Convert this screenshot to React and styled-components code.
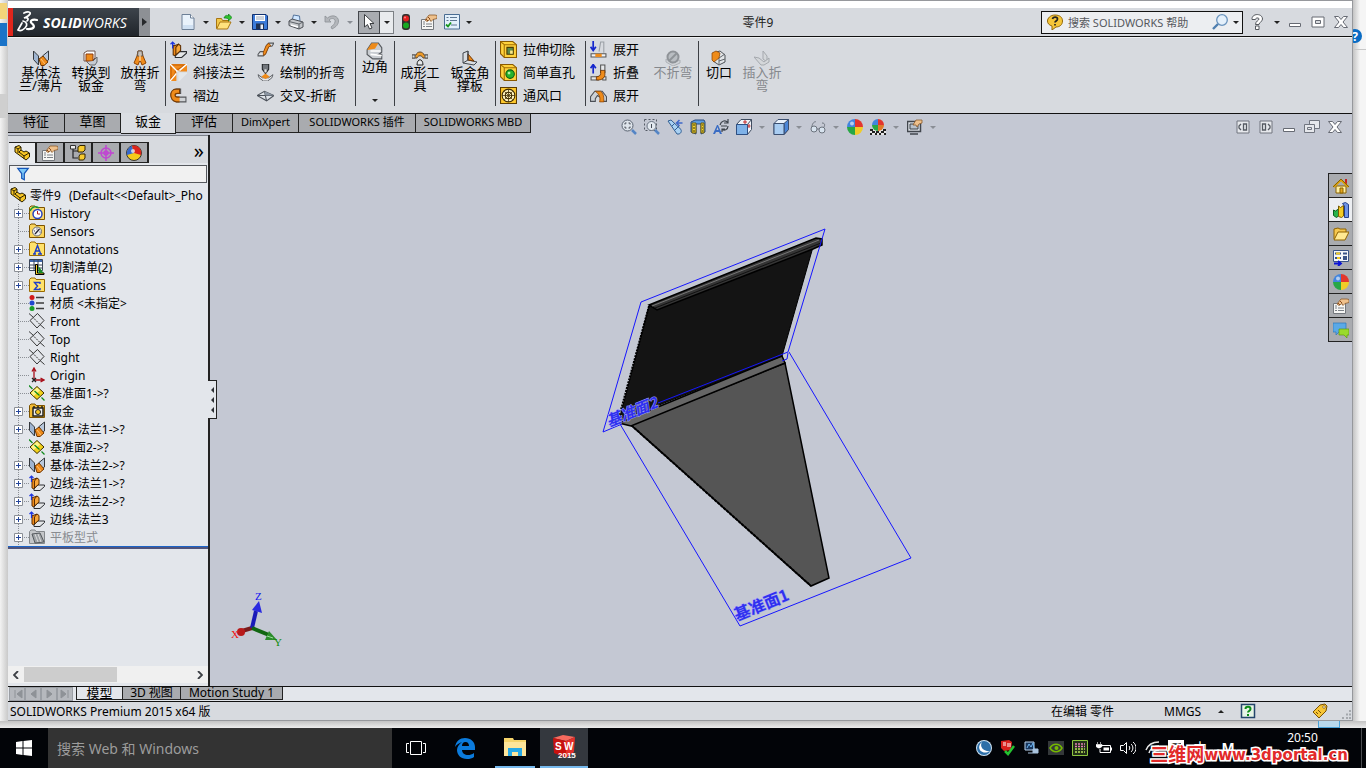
import React from "react";
import styled, { createGlobalStyle, css } from "styled-components";

const ICONS = {
  newDoc: (
    <>
      <path d="M2 .5h8.500L14 4v11.500H2z" fill="#e9f2fb" stroke="#6c7f96" />
      <path d="M10.500.5V4H14" fill="#fff" stroke="#6c7f96" />
      <path d="M3 11h10v4H3z" fill="#cfe0f2" />
    </>
  ),
  open: (
    <>
      <path d="M.5 14.500V4.500h5l1 2h6v2" fill="#f2c94a" stroke="#a87512" />
      <path d="M.7 15 4 8h11l-3.500 7z" fill="#ffe27d" stroke="#a87512" />
      <path d="M8 4c1-3 3-3 4.500-2V0L16 3.500 12.500 7V5C11 4 9.500 4 8 4z" fill="#2fc32f" stroke="#0b7a12" strokeWidth=".7" />
    </>
  ),
  save: (
    <>
      <path d="M.5.500h13.500l1.500 1.500v13.500H.5z" fill="#3c7bd9" stroke="#12316f" />
      <path d="M3 1h10v6H3z" fill="#fff" />
      <path d="M4 3h8M4 5h8" stroke="#9aa7b8" />
      <path d="M4 9.500h8V15H4z" fill="#20304f" />
      <path d="M8.500 10.500h2.500V15H8.500z" fill="#e8edf5" />
    </>
  ),
  print: (
    <>
      <path d="M4 7 5.500 1l6 1L12 7" fill="#cfe6ff" stroke="#55749c" />
      <path d="m1 7 3-2 11 3v5l-4 2L1 11.500z" fill="#c4c7cb" stroke="#4b4f55" />
      <path d="m1 7.500 10 2.500 4-2M11 10v5" fill="none" stroke="#5d6268" />
      <path d="m3 11 7 2" stroke="#fff" strokeWidth="1.500" />
    </>
  ),
  undo: <path d="M1 2v6h6L5 6c3-3 7-1 6 2-.5 2-2 3.500-4 5l1 2c4-2 6.500-4.500 6.500-8C14.500 2 8 0 3.500 4z" fill="#b3b6bb" stroke="#8b9096" strokeWidth=".8" />,
  cursor: <path d="M3.500.5v12.500l3-2.500 2 4.500 2.500-1-2-4.500h4z" fill="#fff" stroke="#3b3e42" />,
  lights: (
    <>
      <rect x="4" y="0" width="8" height="16" rx="3" fill="#32302e" />
      <circle cx="8" cy="4.500" r="3" fill="#e12020" />
      <circle cx="8" cy="11.500" r="3" fill="#18a822" />
      <circle cx="7" cy="3.500" r="1" fill="#ff8080" />
    </>
  ),
  props: (
    <>
      <path d="M.5 5.500h12v10H.5z" fill="#f6f6f4" stroke="#73777c" />
      <path d="M2 10h2m1 0h6M2 12.500h2m1 0h6M2 8h2" stroke="#7c8187" />
      <path d="M4 6 8 1h6l2 .5v3l-4 1-2 2-1-2-3 2z" fill="#efc18c" stroke="#8c5a2c" strokeWidth=".8" />
      <path d="m5 5 2 2m0-4 2 2" stroke="#8c4a1c" />
    </>
  ),
  list: (
    <>
      <path d="M.5.500h15v14.500H.5z" fill="#e3f0fb" stroke="#496c92" />
      <path d="M2.500 3.500h2M6 3.500h7M2.500 6.500h2M6 6.500h7M7 11h6" stroke="#5c7591" />
      <path d="m2 10.500 2 2 3-4" fill="none" stroke="#17961d" strokeWidth="1.800" />
    </>
  ),
  baseFlange: (
    <>
      <path d="M.5 1v8.500l5 5.500V6z" fill="#9fb4d0" stroke="#34383d" />
      <path d="M15.500 1v9l-4 3-2-4V6z" fill="#b9c8dc" stroke="#34383d" />
      <path d="m6 9 4-3 5 6-4 3.500H8z" fill="#ee8b1a" stroke="#703600" />
      <path d="m8 9 4 5" stroke="#ffc277" />
    </>
  ),
  convert: (
    <>
      <path d="M1 3 4 1h8v7l-3 3H1z" fill="#fff" stroke="#6f5348" />
      <path d="M3 4h7v7H3z" fill="#ee8b1a" stroke="#8a3b10" />
      <path d="m10 11 4-4v5l-2 3H7L4 12" fill="#c6cbd2" stroke="#64686e" />
    </>
  ),
  loft: (
    <>
      <path d="M6 1h4l1 5 3 7-4 2-2-5-2 5-4-2 3-7z" fill="#ef8c1d" stroke="#8f4300" />
      <path d="M6 1h4l.5 5h-5z" fill="#c9c3bd" stroke="#64584c" />
      <path d="M8 5v6" stroke="#ffd29a" strokeWidth="1.500" />
    </>
  ),
  edge: (
    <>
      <path d="M4 4.500 8 3v7l-3 4-2-1V4z" fill="#ee8b1a" stroke="#5c2d00" />
      <path d="m5 14 4-4h6.500v1.500L11 15.500H5z" fill="#e4e6e8" stroke="#2c2f33" />
      <path d="m8 3 2 1.500V9l-4.500 4V6z" fill="#f9a73b" stroke="#5c2d00" />
      <path d="M2.500 7V1M.500 3l2-2 2 2" fill="none" stroke="#1d35e0" strokeWidth="1.200" />
    </>
  ),
  miter: (
    <>
      <path d="M0 0h16L9 6H6v4l-6 6z" fill="#f18a1c" />
      <path d="M1 1h13L8 5 5 5 5 9 1 14z" fill="none" stroke="#c65f00" />
      <path d="M9 6 16 0v7H9zM6 9v7H0z" fill="#f18a1c" />
      <path d="m9 6 7-6M6 9l-6 7M0 0l7 7" stroke="#fff" strokeWidth="1.300" />
      <path d="M8 8h8v1l-7 7H8z" fill="#e3e7ea" />
    </>
  ),
  hem: (
    <>
      <path d="M15 9.500V14H6C-1 13-1 2 6 2h4v4H7c-3 0-3 3.500 0 3.500z" fill="#d0d3d6" stroke="#54575b" />
      <path d="M9 14H6C-1 13-1 2 6 2h3v4H7c-3 0-3 3.500 0 3.500h2" fill="#ee8b1a" stroke="#7c3c00" />
    </>
  ),
  jog: (
    <>
      <path d="M1 12.500 3 10h4l2-6 2-2h5l-2 3h-3l-3 7-2 2H1z" fill="#dfe2e5" stroke="#55585c" />
      <path d="m6 10.500 2.500-6L11 2l2 2.500-2 1-3 7-2 1z" fill="#ef8c1d" stroke="#8f4300" strokeWidth=".8" />
    </>
  ),
  sketched: (
    <>
      <path d="M5 0h6v5L8 9 5 5z" fill="#71767c" stroke="#1f2225" />
      <path d="M7 5h2v3H7z" fill="#dfe1e3" />
      <path d="m1 10 4 3h6l4-3-1 3-4 3H6l-4-3z" fill="#e8eaec" stroke="#4b4f55" strokeWidth=".8" />
      <path d="m4 12 4-3 4 3-4 2z" fill="#ee8b1a" />
    </>
  ),
  cross: (
    <>
      <path d="m0 8 7-4 9 4-7 5z" fill="#dde2e8" stroke="#4b5159" />
      <path d="m0 8 16 0M7 4l2 9" stroke="#4b5159" />
      <path d="m7 4 1 4 8 0z" fill="#8b96a3" />
    </>
  ),
  corner: (
    <>
      <path d="M1 7 5 1h6l3 4v4l-3 2h3v4H6l-5-4z" fill="#c9cdd2" stroke="#53575c" />
      <path d="M1 7 5 1h6L8 6z" fill="#ee8b1a" />
      <path d="m4 11 10 1M4 8h9" stroke="#fff" strokeWidth="1.500" />
    </>
  ),
  forming: (
    <>
      <path d="M0 5h4c1-4 7-4 8 0h4v3h-5c-1-3-5-3-6 0H0z" fill="#ee9a26" stroke="#5b4630" />
      <path d="M0 5h3v3H0zM13 5h3v3h-3z" fill="#d9dcdf" stroke="#55585c" />
      <path d="M5 15c0-7 6-7 6 0z" fill="#e7e9eb" stroke="#222" />
    </>
  ),
  gusset: (
    <>
      <path d="m1 3 5-2v9l9 2-3 3-11-2z" fill="#d8dce1" stroke="#43474c" />
      <path d="m6 4 6 7-6-1z" fill="#ee8b1a" stroke="#713500" />
      <path d="M6 1v9L1 13" fill="none" stroke="#43474c" />
    </>
  ),
  extrudeCut: (
    <>
      <path d="M.5.500H12l3.500 3v12H4L.5 12z" fill="#ffd33c" stroke="#8a5a00" />
      <path d="M4 3.500h11.500M4 3.500 4 15M.5.5 4 3.500" stroke="#a36d00" fill="none" />
      <path d="M6.500 6h6v6.500h-6z" fill="#5c8c4d" stroke="#4d3a00" />
      <path d="M9.500 9H12v3H9.500z" fill="#ffe88a" />
    </>
  ),
  hole: (
    <>
      <path d="M.5.500H12l3.500 3v12H4L.5 12z" fill="#ffd33c" stroke="#8a5a00" />
      <path d="M4 3.500h11.500M4 3.500V15M.5.5 4 3.500" stroke="#a36d00" fill="none" />
      <circle cx="9.500" cy="9.500" r="4" fill="#26b32c" stroke="#0c5c12" />
      <circle cx="8.500" cy="8.500" r="1.300" fill="#b5f0a4" />
    </>
  ),
  vent: (
    <>
      <path d="M.5.500h15v15H.5z" fill="#ffc92d" stroke="#5c3c00" />
      <circle cx="8" cy="8" r="6" fill="#fff2bd" stroke="#3d2a00" />
      <circle cx="8" cy="8" r="3" fill="none" stroke="#3d2a00" />
      <path d="M8 2v12M2 8h12M4 4l8 8M12 4l-8 8" stroke="#3d2a00" strokeWidth=".7" />
    </>
  ),
  unfold: (
    <>
      <path d="M3 0v8M.5 5.500 3 9l2.500-3.500" fill="none" stroke="#1527cd" strokeWidth="1.600" />
      <path d="M8.500 10 10 1h3v10" fill="none" stroke="#9a9fa5" />
      <path d="M1 12h14v3H1z" fill="#f3f3f3" stroke="#555" />
      <path d="M5 12h6v3H5z" fill="#ee8b1a" />
    </>
  ),
  fold: (
    <>
      <path d="M3 9V1M.500 4 3 .5 5.500 4" fill="none" stroke="#1527cd" strokeWidth="1.600" />
      <path d="M1 12h7v3H1zM12 12h3v3h-3zM10 1h4v7h-4z" fill="#e7e9eb" stroke="#555" />
      <path d="M10 6h4v4c0 3-3 5-6 5H6v-3c2 0 4-1 4-3z" fill="#ee8b1a" stroke="#6b3200" strokeWidth=".8" />
    </>
  ),
  flatten: (
    <>
      <path d="M.5 13.500V9l4-5h7l4 5v4.500H10V10L7 8l-2 3v2.500z" fill="#cdd2d7" stroke="#4b4f55" />
      <path d="M5 4h5c3 2 3 6 3 10H9c1-4 0-7-4-10z" fill="#ee8b1a" stroke="#843e00" strokeWidth=".7" />
    </>
  ),
  noBend: (
    <>
      <path d="m1 9 6 4 8-3v3l-7 3-7-4z" fill="#d0d3d7" stroke="#aeb2b7" />
      <circle cx="8" cy="7" r="5.500" fill="#b9bdc2" stroke="#8f9398" strokeWidth="2" />
      <path d="m4 11 8-8" stroke="#8f9398" strokeWidth="2" />
    </>
  ),
  rip: (
    <>
      <path d="m2 3 7-2 5 4v7l-6 3-6-4z" fill="#e2e5e8" stroke="#4e5257" />
      <path d="M8 15V8l6-4M8 11l6-2" fill="none" stroke="#62666b" />
      <path d="M1 3 5 1l4 2-1 5-5 4-2-2z" fill="#ee8b1a" stroke="#843e00" strokeWidth=".7" />
    </>
  ),
  insertBend: (
    <>
      <path d="m9 1 4 5v6l-4-3z" fill="#d4d7da" stroke="#a5a9ae" />
      <path d="m0 7 5 1 5 4 5-4v4l-5 3H7z" fill="#d4d7da" stroke="#a5a9ae" />
    </>
  ),
  zoomFit: (
    <>
      <circle cx="6.500" cy="6.500" r="5.500" fill="#dfe5ec" stroke="#596270" />
      <path d="M4 5.500V4h1.500M7.500 4H9v1.500M9 7.500V9H7.500M5.500 9H4V7.500" fill="none" stroke="#444b55" />
      <path d="m11 11 4 4" stroke="#5485c5" strokeWidth="2.500" />
    </>
  ),
  zoomArea: (
    <>
      <path d="M.5.500h12v11H.5z" fill="none" stroke="#555b65" strokeDasharray="2 2" />
      <circle cx="7.500" cy="7" r="4.500" fill="#e3e9f0" stroke="#6a7482" />
      <path d="M7.500 5v4" stroke="#444b55" />
      <path d="m11 11 4 4" stroke="#5485c5" strokeWidth="2.500" />
    </>
  ),
  prevView: (
    <>
      <path d="m1 2 3-1 10 9.500c1 3-1 5-4 4.500z" fill="#a9d1f3" stroke="#315f93" />
      <path d="m5 7 3-3M8 11l4-4" stroke="#315f93" />
      <path d="M15.500 4H10m2.500-3-3 3 3 3" fill="none" stroke="#3f68c9" strokeWidth="1.500" />
    </>
  ),
  section: (
    <>
      <path d="m1 3 4-2h9l1 2v10l-4 2V5H6v10l-5-2z" fill="#5a9be0" stroke="#2a4a7c" />
      <path d="M2 4h4v10H2zM11 4h3v10h-3z" fill="#f4d335" stroke="#6a5a10" />
      <path d="M3 6h2M3 9h2M3 12h2M12 6h1m-1 3h1m-1 3h1" stroke="#3a3a00" />
    </>
  ),
  rotate: (
    <>
      <path d="m0 15 4-9h1l4 9H7l-1-2H3l-1 2zM3.500 11h2L4.500 8z" fill="#3a6cc4" />
      <path d="M7 6c1-4 6-6 8-2M15 0v4h-4M15 7c0 4-4 5-6 3M9 13v-3h3M8 7h6" fill="none" stroke="#3c424b" strokeWidth="1.200" />
    </>
  ),
  orient: (
    <>
      <path d="M.5 5.500 5 .5h10.500v10l-4 5H.5z" fill="#f0f4f9" stroke="#3f4c60" />
      <path d="M.5 5.500h11v10H.5z" fill="#7fb2e8" stroke="#2d4f83" />
      <path d="m11.500 5.500 4-5" stroke="#3f4c60" />
      <path d="M7 3h4m-2-2v4M13 5v4m-1.500-2h3" stroke="#c42a2a" />
    </>
  ),
  cube: (
    <>
      <path d="M1 4.500 5 .5h10.500v10l-4.500 5H1z" fill="#e9f2fc" stroke="#3b4f70" />
      <path d="m11 4.500 4.500-4v10l-4.500 5z" fill="#4a86d8" stroke="#3b4f70" />
      <path d="M1 4.500h10v11H1z" fill="#a9cdf2" stroke="#3b4f70" />
    </>
  ),
  glasses: (
    <>
      <circle cx="4" cy="10" r="3" fill="#d7e3ee" stroke="#6c737d" />
      <circle cx="12" cy="11" r="3" fill="#d7e3ee" stroke="#6c737d" />
      <path d="M7 10h2M2 8c0-4 3-6 4-5M14 8c1-2 1-4-2-4" fill="none" stroke="#6c737d" />
    </>
  ),
  ball: (
    <>
      <path d="M8 8V0A8 8 0 0 0 0 8z" fill="#4285dd" />
      <path d="M8 8h8A8 8 0 0 0 8 0z" fill="#e3362d" />
      <path d="M8 8H0a8 8 0 0 0 8 8z" fill="#28a745" />
      <path d="M8 8v8a8 8 0 0 0 8-8z" fill="#f0cc28" />
      <circle cx="5" cy="4.500" r="2" fill="#fff" opacity=".6" />
    </>
  ),
  scene: (
    <>
      <path d="M0 10h16v6H0z" fill="#e4e4e4" />
      <path d="M0 10h3v2H0zM13 10h3v2h-3zM2 12h3v2H2zM11 12h3v2h-3zM6 12h3v2H6zM0 14h2v2H0zM5 14h2v2H5zM9 14h2v2H9zM14 14h2v2h-2z" fill="#222" />
      <path d="M8 6V0a6 6 0 0 0-6 6z" fill="#4285dd" />
      <path d="M8 6h6a6 6 0 0 0-6-6z" fill="#e3362d" />
      <path d="M8 6H2a6 6 0 0 0 6 6z" fill="#28a745" />
      <path d="M8 6v6a6 6 0 0 0 6-6z" fill="#e07a28" />
    </>
  ),
  viewSet: (
    <>
      <path d="M.5 2.500h13v10H.5z" fill="#d8dde3" stroke="#41464d" strokeWidth="1.500" />
      <path d="M3 5h8v5H3z" fill="#b9c2cc" stroke="#41464d" />
      <path d="M3 15h8" stroke="#41464d" strokeWidth="1.500" />
      <path d="m6 6 3-5h6v3l-3 1-2 3-1-2z" fill="#efc18c" stroke="#8c5a2c" strokeWidth=".8" />
    </>
  ),
  part: (
    <>
      <path d="M1 2 5 .5 7 2v3l3 2 2-1 3.500 2v4L12 15 1 7z" fill="#f6c526" stroke="#2b2100" />
      <path d="m1 2 3 2 3-2M4 4v4M7 5 5 7l5 4 5-3M10 11v3" fill="none" stroke="#2b2100" />
    </>
  ),
  config: (
    <>
      <path d="M3 4v9h5M3 6h5" fill="none" stroke="#222" strokeWidth="1.200" />
      <path d="m8 2 2-1.500h5V5l-2 2H8zM9 11l1.500-2H15v4l-1.500 2H9z" fill="#f7ca2d" stroke="#322500" />
      <path d="M.5.500h5v3.500h-5z" fill="#eee" stroke="#333" />
    </>
  ),
  target: (
    <g fill="none" stroke="#c046d2" strokeWidth="1.500">
      <circle cx="8" cy="8" r="5" />
      <circle cx="8" cy="8" r="2" />
      <path d="M8 0v16M0 8h16" />
    </g>
  ),
  ball3: (
    <>
      <circle cx="8" cy="8" r="7.500" fill="#f4cb1d" stroke="#333" />
      <path d="M8 8 1 10A8 8 0 0 1 6 .7z" fill="#3568ce" />
      <path d="M8 8 6 .7A7.500 7.500 0 0 1 15 10z" fill="#dc241e" />
      <circle cx="7" cy="6" r="2" fill="#fff" opacity=".7" />
    </>
  ),
  history: (
    <>
      <path d="M.5 2.500 2 1h4l1 1.500h8.500v12H.5z" fill="#f9d96d" stroke="#7d5300" />
      <circle cx="8.500" cy="9" r="4.500" fill="#fff" stroke="#2742c0" strokeWidth="1.500" />
      <path d="M8.500 6v3h2.500" stroke="#b31c1c" fill="none" />
      <path d="M1 6c2-5 7-5 9-3" fill="none" stroke="#1a9b31" strokeWidth="1.500" />
    </>
  ),
  sensor: (
    <>
      <path d="M.5 2.500 2 1h4l1 1.500h8.500v12H.5z" fill="#fbd55a" stroke="#7d5300" />
      <circle cx="8" cy="8.500" r="4.500" fill="#f0f0f0" stroke="#6c6c6c" />
      <path d="m6 11 4.500-5" stroke="#223" strokeWidth="1.300" />
      <path d="M5 8h1M8 5.500v1M10.500 9h1" stroke="#335" />
    </>
  ),
  annot: (
    <>
      <path d="M.5 2.500 2 1h4l1 1.500h8.500v12H.5z" fill="#ffe26b" stroke="#9a6a00" />
      <path d="M4 13h3M9 13h4M5.500 12.500l3-8 3 8M6.500 10h4" fill="none" stroke="#1d3ec9" strokeWidth="1.400" />
    </>
  ),
  cutList: (
    <>
      <path d="M.5.500h13v11H.5z" fill="#fff" stroke="#3b4658" />
      <path d="M1 1h12v2H1z" fill="#3f67ad" />
      <path d="M1 6h12M1 9h12M5 1v10M9 1v10" stroke="#3b4658" />
      <path d="M6.500 5.500h2V14H15v1.500H6.500z" fill="#f7d22e" stroke="#000" />
      <path d="m9.500 7 5 7h-5z" fill="#158a25" />
    </>
  ),
  equation: (
    <>
      <path d="M.5 2.500 2 1h4l1 1.500h8.500v12H.5z" fill="#ffe26b" stroke="#9a6a00" />
      <path d="M11 7V5.500H5.500L8.500 9l-3 3.500H11V11" fill="none" stroke="#1d3ec9" strokeWidth="1.400" />
    </>
  ),
  material: (
    <>
      <circle cx="3" cy="2.500" r="2.500" fill="#d21b1b" />
      <circle cx="3" cy="8" r="2.500" fill="#2046cf" />
      <circle cx="3" cy="13.500" r="2.500" fill="#1a9d29" />
      <path d="M7 2.500h8M7 8h8M7 13.500h8" stroke="#3c3c3c" strokeWidth="1.600" />
    </>
  ),
  plane: (
    <g fill="none" stroke="#222" strokeWidth=".9">
      <path d="m8.500.5 6.500 7-7 7.500-7-7.500zM0 .5l4.500 4M11 11.500l4.500 4" />
      <path d="m5 5.500 5.500 5.500" strokeDasharray="2 1" />
    </g>
  ),
  origin: (
    <>
      <path d="M5 13V2M3 4.500 5 1l2 3.500M5 13h9m-2.500-2L15 13l-3.500 2" fill="none" stroke="#a80f1a" strokeWidth="1.300" />
      <path d="m3 11 4 4m-4 0 4-4" stroke="#222" strokeWidth="1.300" />
    </>
  ),
  refPlane: (
    <>
      <path d="m8 1.500 7 6.500-7 6.500L1 8z" fill="#f2d21d" stroke="#3a2c00" />
      <path d="m8 2.500 3 3L4.500 11 2 8z" fill="#fff48a" />
      <path d="m0 .5 3.500 3.500m2 2 5 4.500m2 2 3 3" stroke="#0f8a1c" strokeWidth="1.300" />
    </>
  ),
  sheet: (
    <>
      <path d="M.5 2.500 2 1h4l1 1.500h8.500v12H.5z" fill="#f3bc33" stroke="#7d5300" />
      <path d="M4 5h10v8H4z" fill="#eee" stroke="#222" strokeWidth="1.500" />
      <circle cx="9" cy="9" r="2.500" fill="#f6c526" stroke="#222" />
      <path d="M5 3v2m4-2v2m4-2v2" stroke="#222" strokeWidth="1.500" />
    </>
  ),
  flat: (
    <>
      <path d="M.5 2.500 2 1h4l1 1.500h8.500v12H.5z" fill="#c4c6c9" stroke="#84888c" />
      <path d="m3 5 8-1 4 9-9 1z" fill="#9da1a5" stroke="#55595d" />
      <path d="m6 5 3 8M9 5l3 8" stroke="#ddd" />
    </>
  ),
  filter: <path d="M2 1.500h12L9.500 7.500v7l-3-1.500V7.500z" fill="#7cc8f7" stroke="#1756b8" strokeWidth="1.400" />,
  home: (
    <>
      <path d="M12 1h2v5h-2z" fill="#c62020" />
      <path d="M3 8h10v7H3z" fill="#fff0a5" stroke="#8a6300" />
      <path d="m.5 9 7.500-7 7.500 7" fill="none" stroke="#e0a000" strokeWidth="2" />
      <path d="m0 9 8-8 8 8" fill="none" stroke="#5f4700" strokeWidth=".7" />
      <path d="M7 10h3v5H7z" fill="#e6a61c" stroke="#8a6300" />
    </>
  ),
  library: (
    <>
      <path d="m.5 8 2 1 3-2v7l-2 1.500-3-2z" fill="#27b34b" stroke="#0a5e20" />
      <path d="m5.500 4 2 1.500 3-2V14l-2 1.500-3-1z" fill="#f2cb25" stroke="#7a5b00" />
      <path d="m9.500 1.500 3-1 3 2v13h-4V4z" fill="#6e93e6" stroke="#233f8b" />
    </>
  ),
  folderOpen: (
    <>
      <path d="M1 13V3l4-1 2 1h6v3" fill="#f6c84f" stroke="#8f6200" />
      <path d="m1 14 4-8h11l-4 8z" fill="#ffe992" stroke="#8f6200" />
    </>
  ),
  palette: (
    <>
      <path d="M.5.500h15v11H.5z" fill="#f4f7fb" stroke="#3a5488" />
      <path d="M2 3.500h6M10 3.500h4M2 8h6M10 7h4M10 9h4" stroke="#3a5488" strokeWidth="2" />
      <path d="M3 3.500h4M4 8h3" stroke="#f2cb25" strokeWidth="2" />
      <path d="M1 13.500h6M5 11l3 2.500L5 16" stroke="#0a12d8" strokeWidth="1.800" fill="none" />
    </>
  ),
  chat: (
    <>
      <path d="M0 1h13v9H6l-3 3v-3H0z" fill="#5aa9e6" stroke="#2b77b8" strokeWidth=".7" />
      <path d="M6 7h10v6h-2v3l-3-3H6z" fill="#9ada2b" stroke="#5e9a0c" strokeWidth=".7" />
    </>
  ),
  tip: (
    <>
      <path d="M8 1c5 0 7.500 2.500 7.500 6S13 13 9 13l-4 3v-4C2 11 .5 9.500.5 7S3 1 8 1z" fill="#f5c63a" stroke="#94690c" />
      <path d="M5.500 5c.5-2.500 5-2.500 5 0 0 2-2.500 2-2.500 3.500M8 10v1.500" fill="none" stroke="#222" strokeWidth="1.700" />
    </>
  ),
  lens: (
    <>
      <circle cx="10" cy="6" r="5.300" fill="#e4f0fb" stroke="#6a93bd" strokeWidth="1.300" />
      <path d="m1 15 5-5" stroke="#4f7fb0" strokeWidth="2.400" />
    </>
  ),
  help: (
    <>
      <path d="M3 5.500C2.500-1 13.500-1 13.500 5c0 3-3.500 3-3.500 5.500H6.500c0-3.500 3.500-4 3.500-5.500 0-1.500-3.500-1.500-3.500.5zM6.500 12H10v3.500H6.500z" fill="#fff" stroke="#55595f" />
    </>
  ),
  min: <path d="M2.500 9.500h11v3h-11z" fill="#fff" stroke="#666a73" />,
  max: (
    <>
      <path d="M2 3h12v10H2z" fill="#fff" stroke="#666a73" />
      <path d="M5.500 6.500h5v3h-5z" fill="#d9dce0" stroke="#666a73" />
    </>
  ),
  close: <path d="M1.500 2.500h4L8 5.500l2.500-3h4L10 8l4.500 5.500h-4L8 10.500l-2.500 3h-4L6 8z" fill="#fff" stroke="#666a73" />,
  restore: (
    <>
      <path d="M5.500 1.500h10v8h-10z" fill="#e6e8ec" stroke="#70757f" />
      <path d="M.5 5.500h10v8H.5z" fill="#e6e8ec" stroke="#70757f" />
      <path d="M3.500 8.500h4v2h-4z" fill="none" stroke="#70757f" />
    </>
  ),
  paneL: (
    <>
      <path d="M2 2h12v12H2z" fill="#e6e8ec" stroke="#70757f" />
      <path d="M8.500 5h3v6h-3zM6 5 4 7v2l2 2" fill="none" stroke="#555a62" strokeWidth="1.300" />
    </>
  ),
  paneR: (
    <>
      <path d="M2 2h12v12H2z" fill="#e6e8ec" stroke="#70757f" />
      <path d="M4.500 5h3v6h-3zM10 5l2 2v2l-2 2" fill="none" stroke="#555a62" strokeWidth="1.300" />
    </>
  ),
  qHelp: (
    <>
      <path d="M1.500 1.500h13v13h-13z" fill="#e6f4e6" stroke="#24456c" strokeWidth="1.500" />
      <path d="M5.500 6c0-3 5-3 5 0 0 2-2.500 2-2.500 3.500M8 11v2" fill="none" stroke="#0c8b18" strokeWidth="2" />
    </>
  ),
  tag: (
    <>
      <path d="m1 9 7-7 5-1 2 2-1 5-7 7z" fill="#f7c536" stroke="#7a5100" />
      <circle cx="12" cy="4" r="1.300" fill="#fff" stroke="#7a5100" strokeWidth=".7" />
      <path d="m4 9 2 2m0-4 3 3" stroke="#7a5100" />
    </>
  ),
  moon: (
    <>
      <circle cx="8" cy="8" r="8" fill="#cfe4f5" />
      <circle cx="8" cy="8" r="7" fill="#2d6fa8" />
      <path d="M6 2c-7 6 0 14 8 9-6 1-11-4-8-9z" fill="#fff" />
    </>
  ),
  swCheck: (
    <>
      <path d="m1 1 8-1 3 2-1 8-7 1-3-3z" fill="#d9201c" />
      <path d="M3 3h3M3 5h3M8 3v4m2-4v4" stroke="#fff" />
      <path d="m5 11 3 3 6-8" fill="none" stroke="#25c330" strokeWidth="2.500" />
    </>
  ),
  net: (
    <>
      <path d="M1 2h9v8H1z" fill="#17355c" stroke="#b9d3ee" />
      <path d="m3 8 2-4 2 3 2-4 1 6" fill="none" stroke="#6eb5f2" />
      <path d="M9 9h5v4H9zM4 13h5" fill="#a9c3de" stroke="#a9c3de" />
    </>
  ),
  nvidia: (
    <>
      <path d="M0 1h16v14H0z" fill="#34383a" />
      <path d="M2 8c3-5 9-5 12 0-3 5-9 5-12 0z" fill="none" stroke="#76b900" strokeWidth="1.500" />
      <circle cx="8.500" cy="8" r="2" fill="#76b900" />
    </>
  ),
  meter: (
    <>
      <path d="M.5.500h15v15H.5z" fill="#223017" stroke="#8dc63f" />
      <path d="M3 4h10M3 6.500h10" stroke="#e27fb7" strokeWidth="1.500" strokeDasharray="2 1" />
      <path d="M3 9h10M3 12h10" stroke="#b8e05c" strokeWidth="1.500" strokeDasharray="2 1" />
    </>
  ),
  battery: (
    <>
      <path d="M6 5.500h8.500v7H4V9M15.500 7.500v3" fill="none" stroke="#fff" />
      <path d="M7.500 7.500H13v3H7.500z" fill="#fff" />
      <path d="M1.500 2v2m3-2v2M0 4.500h6v2L4 8H2L0 6.500z" fill="#fff" stroke="#fff" strokeWidth=".6" />
    </>
  ),
  volume: (
    <g fill="none" stroke="#fff">
      <path d="M.5 5.500h3l3-3v11l-3-3h-3z" />
      <path d="M9 6c1 1 1 3 0 4M11 4c2.500 2 2.500 6 0 8M13 2c4 3 4 9 0 12" />
    </g>
  ),
  wifi: (
    <g fill="none" stroke="#e8e8e8" strokeWidth="1.500">
      <path d="M2 10C4 5 9 2 15 2M5 13c1-4 5-7 10-7M9 14c1-3 3-4 6-4" />
    </g>
  ),
  keyboard: (
    <>
      <path d="M0 0h16v16H0z" fill="#fff" />
      <path d="M3 4h10M3 8h10M3 12h10" stroke="#000" strokeWidth="1.500" />
    </>
  ),
};

const Icon = ({ name, size = 16 }) => (
  <svg width={size} height={size} viewBox="0 0 16 16" aria-hidden="true">
    {ICONS[name]}
  </svg>
);

const ribbonGroups = {
  flange: [
    ["edge", "边线法兰"],
    ["miter", "斜接法兰"],
    ["hem", "褶边"],
  ],
  bend: [
    ["jog", "转折"],
    ["sketched", "绘制的折弯"],
    ["cross", "交叉-折断"],
  ],
  cut: [
    ["extrudeCut", "拉伸切除"],
    ["hole", "简单直孔"],
    ["vent", "通风口"],
  ],
  unfold: [
    ["unfold", "展开"],
    ["fold", "折叠"],
    ["flatten", "展开"],
  ],
};

// name, width, latin label
const tabs = [
  ["特征", 57],
  ["草图", 56],
  ["钣金", 55],
  ["评估", 57],
  ["DimXpert", 66, true],
  ["SOLIDWORKS 插件", 117, true],
  ["SOLIDWORKS MBD", 115, true],
];

const headsUp = [
  ["zoomFit", "整屏显示全图"],
  ["zoomArea", "局部放大"],
  ["prevView", "上一视图"],
  ["section", "剖面视图"],
  ["rotate", "旋转视图"],
  ["orient", "视图定向", true],
  ["cube", "显示样式", true],
  ["glasses", "隐藏/显示项目", true],
  ["ball", "编辑外观"],
  ["scene", "应用布景", true],
  ["viewSet", "视图设定", true],
];

// icon, text, can be expanded
const tree = [
  ["history", "History", true],
  ["sensor", "Sensors"],
  ["annot", "Annotations", true],
  ["cutList", "切割清单(2)", true],
  ["equation", "Equations", true],
  ["material", "材质 <未指定>"],
  ["plane", "Front"],
  ["plane", "Top"],
  ["plane", "Right"],
  ["origin", "Origin"],
  ["refPlane", "基准面1->?"],
  ["sheet", "钣金", true],
  ["baseFlange", "基体-法兰1->?", true],
  ["refPlane", "基准面2->?"],
  ["baseFlange", "基体-法兰2->?", true],
  ["edge", "边线-法兰1->?", true],
  ["edge", "边线-法兰2->?", true],
  ["edge", "边线-法兰3", true],
  ["flat", "平板型式", true],
];

const BigTool = ({ icon, label, disabled, width = 50 }) => (
  <BigButton disabled={disabled} $width={width}>
    <Icon name={icon} />
    <span>{label}</span>
  </BigButton>
);

const ToolColumn = ({ items, width }) => (
  <Column $width={width}>
    {items.map(([icon, label], index) => (
      <SmallButton key={index}>
        <Icon name={icon} size={17} />
        {label}
      </SmallButton>
    ))}
  </Column>
);

const QuickAccess = () => (
  <Quick>
    {[
      ["newDoc", "新建"],
      ["open", "打开"],
      ["save", "保存"],
      ["print", "打印"],
      ["undo", "撤消"],
    ].map(([icon, label]) => (
      <React.Fragment key={icon}>
        <IconButton $width={20} aria-label={label}>
          <Icon name={icon} />
        </IconButton>
        <IconButton $width={16} aria-label={label + "选项"}>
          <Arrow $muted={icon === "undo"} />
        </IconButton>
      </React.Fragment>
    ))}
    <SelectButton aria-label="选择">
      <Icon name="cursor" />
    </SelectButton>
    <SelectArrow aria-label="选择选项">
      <Arrow />
    </SelectArrow>
    <IconButton aria-label="重建模型">
      <Icon name="lights" />
    </IconButton>
    <IconButton aria-label="文件属性">
      <Icon name="props" />
    </IconButton>
    <IconButton aria-label="选项">
      <Icon name="list" />
    </IconButton>
    <IconButton $width={12} aria-label="更多选项">
      <Arrow />
    </IconButton>
  </Quick>
);

const Model = () => (
  <Canvas viewBox="210 135 1142 551" role="img" aria-label="零件9">
    <path d="M631 425 785 363 829 578 811 586z" fill="#555" stroke="#000" strokeWidth="1.500" />
    <path d="M631 425 811 586" stroke="#000" strokeWidth="2" strokeDasharray="3 1" />
    <path d="M619 423 782 356 785 363 631 426z" fill="#666" stroke="#000" strokeWidth="1.500" />
    <path d="M649 306 813 247 782 356 619 421z" fill="#141414" stroke="#000" />
    <path d="M649 306 618 421" stroke="#000" strokeWidth="2" strokeDasharray="2 1" />
    <path d="M649 305 816 238 822 239 822 245 813 249 657 310z" fill="#353535" stroke="#000" strokeWidth="1.500" />
    <path d="M652 306 819 240" stroke="#777" />
    <path d="M655 308 821 243" stroke="#111" />
    <g fill="none" stroke="#1616ff">
      <path d="M658 403 788 352 825 229 641 302 603 432 622 424" />
      <path d="M789 352 911 558 740 626 620 424M788 353 787 359 782 361" />
    </g>
    <PlaneText transform="translate(609 427) rotate(-22)" $small>
      基准面2
    </PlaneText>
    <PlaneText transform="translate(737 621) rotate(-22)">基准面1</PlaneText>
  </Canvas>
);

const Triad = () => (
  <TriadSvg width="56" height="60" viewBox="228 588 56 60" aria-hidden="true">
    <path d="m252 628-10 3" stroke="#7a1b1b" strokeWidth="4" />
    <circle cx="241" cy="632" r="4" fill="#b81a1a" />
    <path d="m252 628 4-17" stroke="#1a1ab8" strokeWidth="4" />
    <path d="m259 601-7 9 10 3z" fill="#2a2ae0" />
    <path d="m252 628 17 7" stroke="#116611" strokeWidth="4" />
    <path d="m277 640-12 0 4-9z" fill="#2c8c2c" />
    <path d="m267 636 6 2" stroke="#9adf9a" />
    <text x="255" y="600" fill="#1212f0">Z</text>
    <text x="231" y="638" fill="#f01212">X</text>
    <text x="274" y="646" fill="#0b8a0b">Y</text>
  </TriadSvg>
);

const Chevron = ({ d }) => (
  <svg width="6" height="8" aria-hidden="true">
    <path d={d} fill="none" stroke="#3c3f44" strokeWidth="1.800" />
  </svg>
);

const App = () => {
  return (
    <Screen>
      <GlobalStyle />
      <Desktop>
        <LeftStrip>
          <Block $height={16} $color="#f3d47a" />
          <Block $gap={4} $height={23} $color="#1a73c8" />
          <Block $gap={48} $height={24} $color="#cfcfcf" />
        </LeftStrip>
        <Window>
          <TopGap />
          <TitleBar>
            <Logo>
              <svg width="24" height="22" viewBox="0 0 24 22" aria-hidden="true">
                <g fill="none" stroke="#fff" strokeWidth="1.700" strokeLinecap="round">
                  <path d="M8 2c4-2 7-1 6 1s-4 3-6 4c4-1 5 1 3 3" />
                  <path d="M7 10c4 1 5 4 2 7s-5 3-7 2l4-7" />
                  <path d="M21 9c-5-1-8 1-5 3.500s3 6-5 5.500" strokeWidth="2.200" />
                </g>
              </svg>
              <b>SOLID</b>WORKS
            </Logo>
            <Expand aria-label="菜单">
              <svg width="5" height="8" aria-hidden="true">
                <path d="M0 0v8l5-4z" fill="#26282b" />
              </svg>
            </Expand>
            <QuickAccess />
            <DocTitle>零件9</DocTitle>
            <Search>
              <Icon name="tip" />
              <input aria-label="搜索帮助" placeholder="搜索 SOLIDWORKS 帮助" />
              <IconButton $width={20} aria-label="搜索">
                <Icon name="lens" />
              </IconButton>
              <IconButton $width={12} aria-label="搜索选项">
                <Arrow />
              </IconButton>
            </Search>
            <IconButton $width={28} aria-label="帮助">
              <Icon name="help" />
            </IconButton>
            <IconButton $width={12} aria-label="帮助选项">
              <Arrow />
            </IconButton>
            <IconButton aria-label="最小化">
              <Icon name="min" />
            </IconButton>
            <IconButton aria-label="最大化">
              <Icon name="max" />
            </IconButton>
            <IconButton aria-label="关闭">
              <Icon name="close" />
            </IconButton>
          </TitleBar>

          <Ribbon>
            <Group $width={158} $pad={8}>
              <BigTool icon="baseFlange" label={"基体法\n兰/薄片"} />
              <BigTool icon="convert" label={"转换到\n钣金"} />
              <BigTool icon="loft" label={"放样折\n弯"} width={48} />
            </Group>
            <Group $width={190} $pad={4}>
              <ToolColumn items={ribbonGroups.flange} width={87} />
              <ToolColumn items={ribbonGroups.bend} width={98} />
            </Group>
            <Group $width={39} $pad={0}>
              <CornerButton>
                <Icon name="corner" size={18} />
                <span>边角</span>
                <Arrow />
              </CornerButton>
            </Group>
            <Group $width={101} $pad={0}>
              <BigTool icon="forming" label={"成形工\n具"} />
              <BigTool icon="gusset" label={"钣金角\n撑板"} />
            </Group>
            <Group $width={90} $pad={4}>
              <ToolColumn items={ribbonGroups.cut} width={84} />
            </Group>
            <Group $width={113} $pad={4}>
              <ToolColumn items={ribbonGroups.unfold} width={58} />
              <BigTool icon="noBend" label="不折弯" disabled />
            </Group>
            <Group $width={100} $pad={0} $last>
              <BigTool icon="rip" label="切口" width={40} />
              <BigTool icon="insertBend" label={"插入折\n弯"} disabled width={46} />
            </Group>
          </Ribbon>

          <TabRow>
            {tabs.map(([name, width, latin]) => (
              <Tab key={name} $width={width} $latin={latin} $active={name === "钣金"}>
                {name}
              </Tab>
            ))}
            <HeadsUp>
              {headsUp.map(([icon, label, menu]) => (
                <React.Fragment key={icon}>
                  <IconButton aria-label={label}>
                    <Icon name={icon} />
                  </IconButton>
                  {menu && (
                    <IconButton $width={14} aria-label={label + "选项"}>
                      <Arrow $muted />
                    </IconButton>
                  )}
                </React.Fragment>
              ))}
            </HeadsUp>
            <DocControls>
              {["paneL", "paneR", "min", "restore", "close"].map((icon) => (
                <IconButton key={icon} aria-label={icon}>
                  <Icon name={icon} />
                </IconButton>
              ))}
            </DocControls>
          </TabRow>

          <Work>
            <Panel>
              <PanelTabs>
                {["part", "props", "config", "target", "ball3"].map((icon, index) => (
                  <PanelTab key={icon} $active={index === 0} aria-label={icon}>
                    <Icon name={icon} />
                  </PanelTab>
                ))}
                <More aria-label="更多">»</More>
              </PanelTabs>
              <Filter>
                <Icon name="filter" size={14} />
                <input aria-label="过滤" />
              </Filter>
              <Tree>
                <Root>
                  <Icon name="part" />
                  <span>零件9</span>
                  <Config>(Default&lt;&lt;Default&gt;_Pho</Config>
                </Root>
                {tree.map(([icon, label, expand]) => (
                  <Node key={label} $muted={icon === "flat"}>
                    <Branch>
                      {expand && (
                        <Plus aria-label={"展开 " + label}>
                          <svg width="9" height="9" aria-hidden="true">
                            <path d="M.5.500h8v8h-8z" fill="#fff" stroke="#8b8f96" />
                            <path d="M2 4.500h5M4.500 2v5" stroke="#24459a" />
                          </svg>
                        </Plus>
                      )}
                    </Branch>
                    <Icon name={icon} />
                    <span>{label}</span>
                  </Node>
                ))}
                <Rollback />
              </Tree>
              <ScrollBar>
                <ScrollButton aria-label="向左">
                  <Chevron d="M5 0 1 4l4 4" />
                </ScrollButton>
                <Track>
                  <Thumb />
                </Track>
                <ScrollButton aria-label="向右">
                  <Chevron d="m1 0 4 4-4 4" />
                </ScrollButton>
              </ScrollBar>
            </Panel>
            <Viewport>
              <Model />
              <Triad />
              <Splitter aria-label="折叠面板">
                <svg width="5" height="26" aria-hidden="true">
                  <path d="M4 0v6L1 3zM4 10v6l-3-3zM4 20v6l-3-3z" fill="#2b2e33" />
                </svg>
              </Splitter>
              <TaskPane>
                {["home", "library", "folderOpen", "palette", "ball", "props", "chat"].map((icon, index) => (
                  <PaneButton key={icon} $active={index === 1} aria-label={icon}>
                    <Icon name={icon} />
                  </PaneButton>
                ))}
              </TaskPane>
            </Viewport>
          </Work>

          <BottomTabs>
            {["M3 1v8M10 1 5 5l5 4z", "M8 1 3 5l5 4z", "m3 1 5 4-5 4z", "m1 1 5 4-5 4zM8 1v8"].map((d) => (
              <NavButton key={d} aria-label="移动标签">
                <svg width="11" height="10" aria-hidden="true">
                  <path d={d} fill="#8e9297" stroke="#8e9297" />
                </svg>
              </NavButton>
            ))}
            <BottomTab $active $width={47}>
              模型
            </BottomTab>
            <BottomTab $width={58}>3D 视图</BottomTab>
            <BottomTab $width={102}>Motion Study 1</BottomTab>
          </BottomTabs>
          <Status>
            <Edition>SOLIDWORKS Premium 2015 x64 版</Edition>
            <StatusCell $width={113}>在编辑 零件</StatusCell>
            <StatusCell $width={52}>MMGS</StatusCell>
            <UpArrow />
            <IconButton $width={44} aria-label="快速提示">
              <Icon name="qHelp" />
            </IconButton>
            <TagCell>
              <Icon name="tag" />
            </TagCell>
            <Grip width="10" height="10" viewBox="0 0 10 10" aria-hidden="true">
              <path d="M7 0h2v2H7zM4 3.500h2v2H4zM7 3.500h2v2H7zM0 7h2v2H0zM4 7h2v2H4zM7 7h2v2H7z" fill="#a4a8ad" />
            </Grip>
          </Status>
        </Window>
        <RightStrip>
          <HelpDot>?</HelpDot>
          <RightLine />
        </RightStrip>
      </Desktop>
      <UnderGap>
        <Peek />
      </UnderGap>
      <Taskbar>
        <Start aria-label="开始">
          <svg width="16" height="16" viewBox="0 0 16 16" aria-hidden="true">
            <path d="m0 2 6.500-1v6.500H0zM7.500.9 16 0v7.500H7.500zM0 8.500h6.500V15L0 14zM7.500 8.500H16V16l-8.500-1z" fill="#fff" />
          </svg>
        </Start>
        <WebSearch aria-label="搜索" placeholder="搜索 Web 和 Windows" />
        <TaskButton aria-label="任务视图">
          <svg width="20" height="14" aria-hidden="true">
            <path d="M4.500.5h11v13h-11zM3 2.500H.5v9H3M17 2.500h2.500v9H17" fill="none" stroke="#fff" />
          </svg>
        </TaskButton>
        <TaskButton aria-label="Edge">
          <svg width="20" height="21" viewBox="0 0 20 21" aria-hidden="true">
            <path d="M0 9C1 3 5 0 10 0c6 0 10 4 10 9v3H7c0 3 3 5 6 5 2 0 4-.5 6-2v4c-2 1.500-4 2-7 2-6 0-10-4-10-9 0-3 2-6 5-8-2 1-5 2-7 5zm7-1h7c0-2-1-4-3.500-4S7 6 7 8z" fill="#0b7bdc" />
          </svg>
        </TaskButton>
        <TaskButton $open $narrow aria-label="文件资源管理器">
          <svg width="22" height="18" aria-hidden="true">
            <path d="M0 0h9l1 2h12v16H0z" fill="#f5d46b" />
            <path d="M0 4h22v14H0z" fill="#fde59a" />
            <path d="M4 18v-8h14v8h-4v-4H8v4z" fill="#26a9e6" />
          </svg>
        </TaskButton>
        <TaskButton $open $current aria-label="SOLIDWORKS 2015">
          <svg width="24" height="24" viewBox="0 0 24 24" aria-hidden="true">
            <path d="m1 3 10-3 12 2-9 4z" fill="#f66a5e" />
            <path d="m1 3 13 3v17L2 18z" fill="#c8120f" />
            <path d="m14 6 9-4-1 15-8 6z" fill="#e4302a" />
            <text x="3" y="15" fontSize="10">S</text>
            <text x="12" y="15" fontSize="10">W</text>
            <text x="6" y="23" fontSize="8">2015</text>
          </svg>
        </TaskButton>
        <Tray>
          {["moon", "swCheck", "net", "nvidia", "meter", "battery", "volume", "wifi", "keyboard"].map((icon) => (
            <TrayIcon key={icon}>
              <Icon name={icon} />
            </TrayIcon>
          ))}
          <TrayIcon>中</TrayIcon>
          <TrayIcon $wide>
            <b>M</b>
          </TrayIcon>
        </Tray>
        <Clock>20:50</Clock>
        <ShowDesktop aria-label="显示桌面" />
        <Watermark>
          <span>三维网</span>www.3dportal.cn
        </Watermark>
      </Taskbar>
    </Screen>
  );
};

export default App;

const GlobalStyle = createGlobalStyle`
  * {
    box-sizing: border-box;
  }
  body {
    margin: 0;
    font-family: "Noto Sans", "Noto Sans CJK SC", sans-serif;
    font-size: 12px;
    color: #000;
  }
  button, input {
    font: inherit;
    color: inherit;
    border: 0;
    padding: 0;
    margin: 0;
    background: none;
    border-radius: 0;
  }
  svg {
    display: block;
    flex: none;
  }
`;

const center = css`
  display: flex;
  align-items: center;
  justify-content: center;
`;

const Screen = styled.div`
  min-height: 100vh;
  display: flex;
  flex-direction: column;
  overflow: hidden;
`;

const Desktop = styled.div`
  flex: 1;
  display: grid;
  grid-template-columns: 8px minmax(0, 1fr) 13px;
  background: #efefef;
`;

const LeftStrip = styled.div`
  padding-top: 3px;
  background: linear-gradient(90deg, #f3f3f3, #c9c9c9);
`;

const Block = styled.div`
  height: ${({ $height }) => $height}px;
  margin: ${({ $gap }) => $gap || 0}px 1px 0 0;
  background: ${({ $color }) => $color};
`;

const RightStrip = styled.div`
  padding-top: 29px;
  overflow: hidden;
  background: linear-gradient(90deg, #c4c4c4, #f5f5f5 7px);
`;

const HelpDot = styled.div`
  ${center}
  width: 14px;
  height: 14px;
  margin-left: -5px;
  border-radius: 50%;
  background: #0a6cc4;
  color: #fff;
  font-weight: bold;
`;

const RightLine = styled.div`
  height: 1px;
  margin-top: 6px;
  background: #c8c8c8;
`;

const UnderGap = styled.div`
  height: 7px;
  display: flex;
  justify-content: flex-end;
  padding-right: 26px;
  background: linear-gradient(#c3c3c3, #ececec);
`;

const Peek = styled.div`
  width: 22px;
  border: 1px solid #4ba3d8;
  border-top: 0;
  background: #b9d9ec;
`;

const Window = styled.div`
  display: flex;
  flex-direction: column;
  background: #d7dadf;
  border: solid #96989c;
  border-width: 1px 1px 1px 0;
`;

const TopGap = styled.div`
  height: 7px;
  background: #fff;
`;

const TitleBar = styled.header`
  height: 29px;
  display: flex;
  align-items: center;
  background: #d7dadf;
  border-bottom: 1px solid #111;
`;

const Logo = styled.div`
  width: 131px;
  height: 28px;
  align-self: flex-start;
  display: flex;
  align-items: center;
  border-left: 5px solid #e0261c;
  background: linear-gradient(#3d444c, #20252b);
  color: #fff;
  font: italic 14px "Open Sans", sans-serif;
  svg {
    margin: 0 3px;
  }
`;

const Expand = styled.button`
  ${center}
  width: 11px;
  height: 28px;
  align-self: flex-start;
  background: #8d9095;
`;

const Quick = styled.div`
  display: flex;
  align-items: center;
  padding-left: 28px;
`;

const IconButton = styled.button`
  ${center}
  width: ${({ $width }) => $width || 23}px;
  height: 22px;
  flex: none;
`;

const SelectButton = styled.button`
  ${center}
  width: 22px;
  height: 23px;
  border: 1px solid #44474c;
  background: #a9acb1;
`;

const SelectArrow = styled.button`
  ${center}
  width: 14px;
  height: 23px;
  border: 1px solid #7c8085;
  border-left: 0;
  background: #e9ebee;
`;

const Arrow = styled.i`
  border: solid transparent;
  border-width: 3px 3px 0;
  border-top-color: ${({ $muted }) => ($muted ? "#8a8e95" : "#222")};
`;

const DocTitle = styled.div`
  flex: 1;
  text-align: center;
  color: #222;
`;

const Search = styled.label`
  width: 202px;
  height: 23px;
  display: flex;
  align-items: center;
  padding-left: 5px;
  border: 1px solid #111;
  background: #eceef1;
  input {
    flex: 1;
    min-width: 0;
    padding-left: 5px;
    font-size: 11px;
    outline: 0;
  }
  input::placeholder {
    color: #55585d;
  }
`;

const Ribbon = styled.div`
  height: 77px;
  display: flex;
  border-top: 1px solid #eef0f2;
  border-bottom: 1px solid #111;
  background: #d7dadf;
`;

const Group = styled.div`
  width: ${({ $width }) => $width}px;
  height: 65px;
  margin-top: 3px;
  display: flex;
  padding-left: ${({ $pad }) => $pad}px;
  border-right: ${({ $last }) => ($last ? "0" : "1px solid #3c3f44")};
`;

const BigButton = styled.button`
  width: ${({ $width }) => $width}px;
  display: flex;
  flex: none;
  flex-direction: column;
  align-items: center;
  padding-top: 9px;
  font-size: 13px;
  line-height: 13px;
  white-space: pre;
  &:disabled {
    color: #85888d;
  }
`;

const CornerButton = styled.button`
  flex: 1;
  display: flex;
  flex-direction: column;
  align-items: center;
  padding: 1px 0 4px;
  font-size: 13px;
  line-height: 13px;
  ${Arrow} {
    margin-top: auto;
  }
`;

const Column = styled.div`
  width: ${({ $width }) => $width}px;
  margin-top: -3px;
`;

const SmallButton = styled.button`
  height: 23px;
  display: flex;
  align-items: center;
  gap: 6px;
  font-size: 13px;
  line-height: 13px;
  white-space: nowrap;
`;

const TabRow = styled.nav`
  height: 21px;
  display: flex;
  align-items: flex-start;
  background: #c4c8d3;
`;

const Tab = styled.button`
  width: ${({ $width }) => $width}px;
  height: ${({ $active }) => ($active ? 21 : 19)}px;
  flex: none;
  margin-top: ${({ $active }) => ($active ? -1 : 0)}px;
  padding-bottom: 3px;
  border: solid #222;
  border-width: 0 1px 1px 0;
  background: ${({ $active }) => ($active ? "#dbdee3" : "#a9abaf")};
  font-size: ${({ $latin }) => ($latin ? 11 : 13)}px;
  line-height: 15px;
  white-space: nowrap;
`;

const HeadsUp = styled.div`
  display: flex;
  margin-left: 86px;
  padding-top: 2px;
`;

const DocControls = styled.div`
  display: flex;
  margin-left: auto;
  padding: 2px 6px 0 0;
`;

const Work = styled.div`
  flex: 1;
  display: flex;
  border-bottom: 1px solid #111;
`;

const Panel = styled.aside`
  width: 202px;
  display: flex;
  flex: none;
  flex-direction: column;
  background: #e3e6eb;
  border-right: 2px solid #222;
`;

const PanelTabs = styled.div`
  height: 28px;
  display: flex;
  align-items: flex-end;
  padding: 0 4px 0 1px;
  background: #d7dadf;
  border-top: 1px solid #7b8089;
`;

const PanelTab = styled.button`
  ${center}
  width: 28px;
  height: 21px;
  border: solid #222;
  border-width: 1px 2px ${({ $active }) => ($active ? 0 : 1)}px 0;
  background: ${({ $active }) => ($active ? "#e9ebee" : "#a9abaf")};
`;

const More = styled.button`
  margin-left: auto;
  padding-bottom: 2px;
  font-size: 20px;
  line-height: 20px;
`;

const Filter = styled.label`
  height: 18px;
  display: flex;
  align-items: center;
  margin: 2px 1px 3px;
  padding-left: 6px;
  border: 1px solid #55585d;
  background: #f1f1f1;
  input {
    flex: 1;
    min-width: 0;
    outline: 0;
  }
`;

const Tree = styled.div`
  flex: 1;
`;

const Root = styled.div`
  height: 18px;
  display: flex;
  align-items: center;
  gap: 4px;
  padding-left: 2px;
  white-space: nowrap;
`;

const Config = styled.span`
  padding-left: 4px;
`;

const Node = styled.div`
  height: 18px;
  display: flex;
  align-items: center;
  padding-left: 6px;
  color: ${({ $muted }) => ($muted ? "#888b90" : "#000")};
  white-space: nowrap;
  > span {
    padding-left: 5px;
  }
`;

const Branch = styled.div`
  width: 15px;
  height: 18px;
  display: flex;
  align-items: center;
  background:
    repeating-linear-gradient(#8c9096 0 1px, transparent 1px 2px) 4px 0 / 1px 18px no-repeat,
    repeating-linear-gradient(90deg, #8c9096 0 1px, transparent 1px 2px) 4px 9px / 11px 1px no-repeat;
`;

const Plus = styled.button`
  width: 9px;
  height: 9px;
`;

const Rollback = styled.div`
  height: 3px;
  border-top: 1px solid #1c64c8;
  border-bottom: 2px solid #50547c;
`;

const ScrollBar = styled.div`
  height: 17px;
  display: flex;
  margin-bottom: 3px;
  background: #f0f0f0;
`;

const ScrollButton = styled.button`
  ${center}
  width: 16px;
`;

const Track = styled.div`
  flex: 1;
  padding: 1px 0;
`;

const Thumb = styled.div`
  width: 93px;
  height: 15px;
  background: #cdcdcd;
`;

const Viewport = styled.main`
  flex: 1;
  min-width: 0;
  position: relative;
  background: #c4c8d3;
`;

const Canvas = styled.svg`
  width: 100%;
  height: 100%;
  position: absolute;
`;

const PlaneText = styled.text`
  fill: #3030f0;
  stroke: #a4a6f2;
  stroke-width: 1px;
  paint-order: stroke;
  font-family: "Noto Sans CJK SC", sans-serif;
  font-weight: bold;
  font-size: ${({ $small }) => ($small ? 15 : 16)}px;
  font-style: ${({ $small }) => ($small ? "italic" : "normal")};
`;

const TriadSvg = styled.svg`
  position: absolute;
  left: 18px;
  bottom: 38px;
  font: 11px "Liberation Serif", serif;
`;

const Splitter = styled.button`
  ${center}
  position: absolute;
  left: -2px;
  top: 245px;
  width: 9px;
  height: 39px;
  border: 1px solid #222;
  border-left: 0;
  background: #e3e6eb;
`;

const TaskPane = styled.div`
  position: absolute;
  top: 38px;
  right: 0;
  border-top: 1px solid #222;
`;

const PaneButton = styled.button`
  ${center}
  width: 24px;
  height: 24px;
  border: solid #222;
  border-width: 0 0 1px 1px;
  background: ${({ $active }) => ($active ? "#eceef1" : "#a9abaf")};
`;

const BottomTabs = styled.div`
  height: 15px;
  display: flex;
  align-items: flex-start;
  padding-left: 1px;
  background: #e3e6eb;
  border-bottom: 1px solid #111;
`;

const NavButton = styled.button`
  ${center}
  width: 16px;
  height: 14px;
  border: 1px solid #9a9ea4;
  background: #b5b8bd;
`;

const BottomTab = styled.button`
  width: ${({ $width }) => $width}px;
  height: 13px;
  margin-left: ${({ $active }) => ($active ? 3 : 0)}px;
  border: solid #222;
  border-width: 0 1px 1px ${({ $active }) => ($active ? 1 : 0)}px;
  background: ${({ $active }) => ($active ? "#e3e6eb" : "#a9abaf")};
  font-size: ${({ $active }) => ($active ? 13 : 12)}px;
  line-height: 12px;
  white-space: nowrap;
`;

const Status = styled.footer`
  height: 18px;
  display: flex;
  align-items: center;
  padding-left: 2px;
`;

const Edition = styled.span`
  flex: 1;
`;

const StatusCell = styled.span`
  width: ${({ $width }) => $width}px;
`;

const UpArrow = styled.i`
  margin: 0 2px;
  border: solid transparent;
  border-width: 0 3px 3px;
  border-bottom-color: #222;
`;

const TagCell = styled.span`
  padding: 0 14px 0 42px;
`;

const Grip = styled.svg`
  align-self: flex-end;
`;

const Taskbar = styled.footer`
  height: 40px;
  display: flex;
  position: relative;
  background: #020408;
  color: #fff;
`;

const Start = styled.button`
  ${center}
  width: 48px;
`;

const WebSearch = styled.input`
  width: 344px;
  padding-left: 9px;
  background: #333;
  font-size: 14px;
  &::placeholder {
    color: #9c9c9c;
  }
`;

const TaskButton = styled.button`
  ${center}
  width: ${({ $narrow }) => ($narrow ? 40 : 48)}px;
  margin: ${({ $narrow }) => ($narrow ? "0 5px" : "0 1px 0 0")};
  border-bottom: ${({ $open }) => ($open ? "2px solid #76b9ed" : "0")};
  background: ${({ $current }) => ($current ? "#34383e" : "none")};
  text {
    fill: #fff;
    font-family: "Liberation Sans", sans-serif;
    font-weight: bold;
  }
`;

const Tray = styled.div`
  display: flex;
  margin-left: auto;
`;

const TrayIcon = styled.span`
  ${center}
  width: ${({ $wide }) => ($wide ? 32 : 24)}px;
  font-size: 14px;
  line-height: 14px;
`;

const Clock = styled.time`
  width: 117px;
  padding-top: 1px;
  text-align: center;
  line-height: 18px;
`;

const ShowDesktop = styled.button`
  width: 5px;
  border-left: 1px solid #4a4c50;
`;

const Watermark = styled.div`
  position: absolute;
  right: 18px;
  bottom: 3px;
  display: flex;
  align-items: center;
  color: #e22a2a;
  font: bold 15px/20px "DejaVu Sans", "Noto Sans CJK SC", sans-serif;
  -webkit-text-stroke: 3px #fff;
  paint-order: stroke fill;
  span {
    font-size: 18px;
  }
`;
